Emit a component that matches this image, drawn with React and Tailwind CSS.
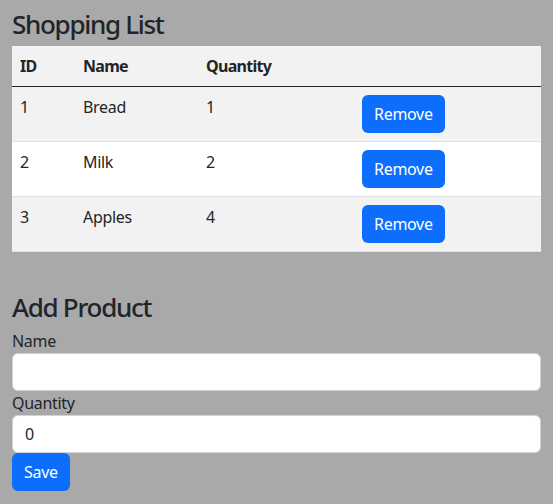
import React, { useState } from "react";

const initialItems = [
  { id: 1, name: "Bread", quantity: 1 },
  { id: 2, name: "Milk", quantity: 2 },
  { id: 3, name: "Apples", quantity: 4 },
];

function ShoppingTable({ items, onRemove }) {
  return (
    <table className="w-full border-collapse text-left text-base">
      <thead>
        <tr className="bg-[#f2f2f2] border-b border-[#212529] tracking-[-0.7px]">
          <th className="w-[63px] p-2 font-bold leading-6">ID</th>
          <th className="w-[123px] p-2 font-bold leading-6">Name</th>
          <th className="w-[156px] p-2 font-bold leading-6">Quantity</th>
          <th className="p-2"></th>
        </tr>
      </thead>
      <tbody>
        {items.map((item, index) => (
          <tr
            key={item.id}
            className={`border-b border-[#dee2e6] align-top ${
              index % 2 === 0 ? "bg-[#f2f2f2]" : "bg-white"
            }`}
          >
            <td className="p-2 leading-6">{item.id}</td>
            <td className="p-2 leading-6">{item.name}</td>
            <td className="p-2 leading-6">{item.quantity}</td>
            <td className="p-2">
              <button
                type="button"
                onClick={() => onRemove(item.id)}
                className="h-[38px] px-3 rounded-md bg-[#0d6efd] text-white leading-6"
              >
                Remove
              </button>
            </td>
          </tr>
        ))}
      </tbody>
    </table>
  );
}

export default function App() {
  const [items, setItems] = useState(initialItems);
  const [name, setName] = useState("");
  const [quantity, setQuantity] = useState(0);

  const handleSave = () => {
    if (!name.trim()) return;
    const nextId = items.length ? Math.max(...items.map((i) => i.id)) + 1 : 1;
    setItems([...items, { id: nextId, name, quantity: Number(quantity) }]);
    setName("");
    setQuantity(0);
  };

  return (
    <div
      className="min-h-screen bg-[#a9a9a9] px-3 text-[#212529] tracking-[-0.3px]"
      style={{ fontFamily: '"Noto Sans", sans-serif' }}
    >
      <h2 className="pt-[9px] pb-[6px] text-[26px] leading-[31px] font-medium tracking-[-1.3px]">
        Shopping List
      </h2>
      <ShoppingTable
        items={items}
        onRemove={(id) => setItems(items.filter((i) => i.id !== id))}
      />

      <h2 className="mt-[40px] mb-[6px] text-[26px] leading-[31px] font-medium tracking-[-1.3px]">
        Add Product
      </h2>
      <label className="block leading-6">Name</label>
      <input
        type="text"
        value={name}
        onChange={(e) => setName(e.target.value)}
        className="block w-full h-[38px] px-3 rounded-md border border-[#ced4da] bg-white outline-none"
      />
      <label className="block leading-6">Quantity</label>
      <input
        type="number"
        value={quantity}
        onChange={(e) => setQuantity(e.target.value)}
        className="block w-full h-[38px] px-3 rounded-md border border-[#ced4da] bg-white outline-none"
      />
      <button
        type="button"
        onClick={handleSave}
        className="h-[38px] px-3 rounded-md bg-[#0d6efd] text-white leading-6"
      >
        Save
      </button>
    </div>
  );
}
